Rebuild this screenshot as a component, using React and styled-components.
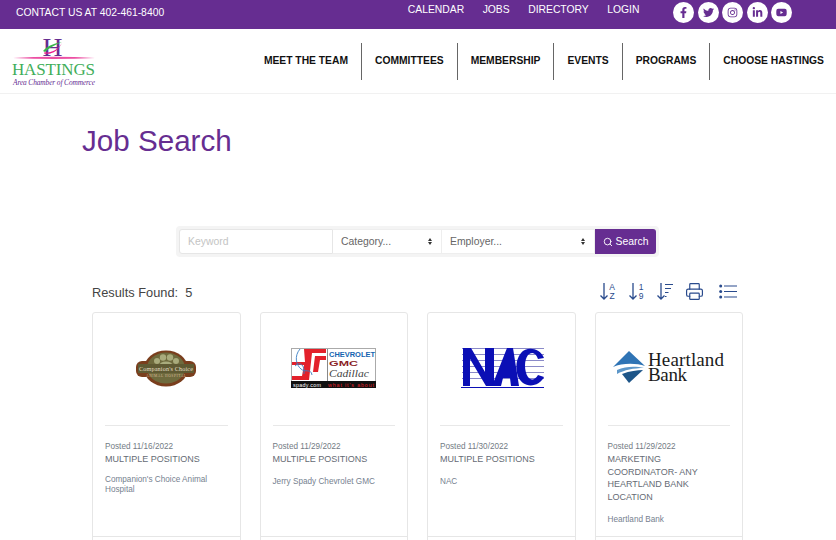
import React from 'react';
import styled, { createGlobalStyle } from 'styled-components';
import { FaFacebookF, FaTwitter, FaInstagram, FaLinkedinIn, FaYoutube } from 'react-icons/fa';
import { Printer, Search } from 'lucide-react';

const GlobalStyle = createGlobalStyle`
    html, body {
        margin: 0;
        height: 540px;
        overflow: hidden;
        background: #fff;
        font-family: "Liberation Sans", Arial, sans-serif;
    }
`;

const topLinks = ['CALENDAR', 'JOBS', 'DIRECTORY', 'LOGIN'];
const socials = [FaFacebookF, FaTwitter, FaInstagram, FaLinkedinIn, FaYoutube];
const navItems = ['MEET THE TEAM', 'COMMITTEES', 'MEMBERSHIP', 'EVENTS', 'PROGRAMS', 'CHOOSE HASTINGS'];

function SortArrow() {
    return <path d="M5 1 V17 M1.5 13.5 L5 17 L8.5 13.5" fill="none" stroke="currentColor" strokeWidth="1.3" />;
}

function SortLabelIcon({ top, bottom }) {
    return (
        <svg width="17" height="19" viewBox="0 0 17 19">
            <SortArrow />
            <text x="13" y="7.5" textAnchor="middle" fontSize="8.5" fontFamily="Liberation Sans, sans-serif" fill="currentColor">{top}</text>
            <text x="13" y="17" textAnchor="middle" fontSize="8.5" fontFamily="Liberation Sans, sans-serif" fill="currentColor">{bottom}</text>
        </svg>
    );
}

function SortBarsIcon() {
    return (
        <svg width="17" height="19" viewBox="0 0 17 19">
            <SortArrow />
            <path d="M9 2.5 H17 M9 6.5 H15 M9 10.5 H12.5 M9 14.5 H10.5" stroke="currentColor" strokeWidth="1.1" />
        </svg>
    );
}

function ListIcon() {
    return (
        <svg width="18" height="15" viewBox="0 0 18 15">
            <circle cx="1.7" cy="2" r="1.5" fill="currentColor" />
            <circle cx="1.7" cy="7.5" r="1.5" fill="currentColor" />
            <circle cx="1.7" cy="13" r="1.5" fill="currentColor" />
            <path d="M5 2 H18 M5 7.5 H18 M5 13 H18" stroke="currentColor" strokeWidth="1.2" />
        </svg>
    );
}

function HastingsLogo() {
    return (
        <svg width="86" height="60" viewBox="0 -10 86 60">
            <text x="31.5" y="19" fill="#662d91" fontFamily="Liberation Serif, serif" fontSize="26" textLength="20" lengthAdjust="spacingAndGlyphs">H</text>
            <path d="M32 14 C37 8 45 6 51 5 C46 7 39 10 34 15 Z" fill="#39b54a" />
            <path d="M33 15.5 C40 16 47 13 51 6 C47 14 41 18 33 16.5 Z" fill="#ec1e8c" />
            <path d="M2 21 Q43 18.6 84 21 Q43 23 2 21Z" fill="#ec4fa3" />
            <text x="1" y="38" fontFamily="Liberation Serif, serif" fontSize="17" fill="#3fae5a" textLength="83">HASTINGS</text>
            <text x="2" y="47.5" fontFamily="Liberation Serif, serif" fontStyle="italic" fontSize="7.4" fill="#662d91" textLength="82">Area Chamber of Commerce</text>
        </svg>
    );
}

function CompanionLogo() {
    return (
        <svg width="62" height="37" viewBox="0 0 62 37">
            <ellipse cx="31" cy="18.5" rx="22" ry="18" fill="#7a3e1d" />
            <rect x="1" y="11" width="60" height="16" rx="6" fill="#7a3e1d" />
            <ellipse cx="31" cy="18" rx="19" ry="15.5" fill="#6e6a3d" />
            <g fill="#a9ab7c">
                <circle cx="22" cy="11" r="3" />
                <circle cx="28" cy="7.5" r="3.2" />
                <circle cx="35" cy="7.5" r="3.2" />
                <circle cx="41" cy="11" r="3" />
                <ellipse cx="31" cy="16" rx="7" ry="4.5" />
            </g>
            <rect x="3" y="14" width="56" height="9" fill="#5f5a33" />
            <text x="31" y="21" textAnchor="middle" fontFamily="Liberation Serif, serif" fontSize="6.2" fill="#e4dfc6" textLength="54">Companion's Choice</text>
            <text x="31" y="27.4" textAnchor="middle" fontFamily="Liberation Serif, serif" fontSize="3.6" fill="#d8b998" textLength="40">ANIMAL HOSPITAL</text>
        </svg>
    );
}

function SpadyLogo() {
    return (
        <svg width="85" height="40" viewBox="0 0 85 40">
            <rect x="0.5" y="0.5" width="84" height="39" fill="#fff" stroke="#aaa" />
            <rect x="0" y="33" width="85" height="7" fill="#111" />
            <path d="M13 1 H35 V5 H21 L18 32 H1 V28 H11 L13 17 H1 V14 H14 Z" fill="#e3202a" />
            <path d="M24 8 H35 V12 H29 L27 24 H22 Z" fill="#e3202a" />
            <path d="M9 1 C3 8 5 17 10 21 C14 25 20 20 21 27 M4 18 C9 13 14 17 13 26" stroke="#3a7fc4" strokeWidth="0.9" fill="none" />
            <rect x="36" y="1" width="1" height="32" fill="#888" />
            <text x="38" y="9" fontSize="6.6" fontWeight="700" fontFamily="Liberation Sans, sans-serif" fill="#1564b0" textLength="46" lengthAdjust="spacingAndGlyphs">CHEVROLET</text>
            <text x="38" y="18" fontSize="6.6" fontWeight="700" fontFamily="Liberation Sans, sans-serif" fill="#8b1f27" textLength="29" lengthAdjust="spacingAndGlyphs">GMC</text>
            <text x="38" y="29" fontSize="10" fontStyle="italic" fontFamily="Liberation Serif, serif" fill="#444" textLength="40" lengthAdjust="spacingAndGlyphs">Cadillac</text>
            <text x="2" y="38.5" fontSize="5.4" fontFamily="Liberation Sans, sans-serif" fill="#fff" textLength="28">spady.com</text>
            <text x="37" y="38.5" fontSize="5.4" fontFamily="Liberation Sans, sans-serif" fill="#e3202a" textLength="46">what it's about</text>
        </svg>
    );
}

function NacLogo() {
    return (
        <svg width="86" height="42" viewBox="-3 0 86 42">
            <path d="M1 1.5 H85 M1 7.5 H85 M1 13.5 H85 M1 19.5 H85 M1 25.5 H85 M1 31.5 H85" stroke="#8a8ac8" strokeWidth="1" />
            <path d="M2 1 H10 L24 25 V1 H33 V39 H25 L9 12 V39 H2 Z" fill="#0b0fb5" />
            <path d="M31 39 L46 1 H52 L58 39 H50 L49 31 H42 L40 39 Z" fill="#0b0fb5" />
            <path d="M83 11 C79 1 66 -1 60 6 C53 14 54 30 62 36 C69 41 79 38 83 30 L77 28 C74 33 70 34 67 30 C63 24 63 13 67 8 C71 4 75 6 77 12 Z" fill="#0b0fb5" />
            <path d="M0 40.5 H84" stroke="#0b0fb5" strokeWidth="1.2" />
        </svg>
    );
}

function HeartlandLogo() {
    return (
        <svg width="113" height="38" viewBox="0 -1 113 38">
            <path d="M17 1 L33 16 C24 13 10 13 1 17 Z" fill="#2f74b5" />
            <path d="M5 20 C14 16 24 16 32 18 C22 18 12 20 5 24 Z" fill="#5d97c9" />
            <path d="M10 24 C18 21 25 20 31 20 L17 33 Z" fill="#1d5588" />
            <text fontFamily="Liberation Serif, serif" fontSize="19" fill="#1b1b1b">
                <tspan x="36" y="16" textLength="76">Heartland</tspan>
                <tspan x="36" y="31" textLength="39">Bank</tspan>
            </text>
        </svg>
    );
}

const jobs = [
    { posted: '11/16/2022', title: 'MULTIPLE POSITIONS', employer: "Companion's Choice Animal Hospital", Logo: CompanionLogo },
    { posted: '11/29/2022', title: 'MULTIPLE POSITIONS', employer: 'Jerry Spady Chevrolet GMC', Logo: SpadyLogo },
    { posted: '11/30/2022', title: 'MULTIPLE POSITIONS', employer: 'NAC', Logo: NacLogo },
    { posted: '11/29/2022', title: 'MARKETING COORDINATOR- ANY HEARTLAND BANK LOCATION', employer: 'Heartland Bank', Logo: HeartlandLogo },
];

export default function App() {
    return (
        <>
            <GlobalStyle />
            <TopBar>
                <Contact>CONTACT US AT 402-461-8400</Contact>
                <TopRight>
                    <TopLinks>
                        {topLinks.map((link) => (
                            <TopLink key={link}>{link}</TopLink>
                        ))}
                    </TopLinks>
                    <Socials>
                        {socials.map((Icon, i) => (
                            <Social key={i}>
                                <Icon size={11} />
                            </Social>
                        ))}
                    </Socials>
                </TopRight>
            </TopBar>
            <Header>
                <LogoBox>
                    <HastingsLogo />
                </LogoBox>
                <Nav>
                    {navItems.map((item) => (
                        <NavItem key={item}>{item}</NavItem>
                    ))}
                </Nav>
            </Header>
            <Main>
                <Title>Job Search</Title>
                <SearchBar>
                    <Keyword placeholder="Keyword" />
                    <FakeSelect $width={109}>
                        Category...
                        <Caret />
                    </FakeSelect>
                    <FakeSelect $width={153}>
                        Employer...
                        <Caret />
                    </FakeSelect>
                    <SearchButton>
                        <Search size={10} strokeWidth={2.2} />
                        Search
                    </SearchButton>
                </SearchBar>
                <ResultsRow>
                    <Results>Results Found:&nbsp; 5</Results>
                    <Tools>
                        <SortLabelIcon top="A" bottom="Z" />
                        <SortLabelIcon top="1" bottom="9" />
                        <SortBarsIcon />
                        <Printer size={19} strokeWidth={1.5} />
                        <ListIcon />
                    </Tools>
                </ResultsRow>
                <Cards>
                    {jobs.map((job) => (
                        <Card key={job.employer}>
                            <CardImage>
                                <job.Logo />
                            </CardImage>
                            <CardBody>
                                <Posted>Posted {job.posted}</Posted>
                                <JobTitle>{job.title}</JobTitle>
                                <Employer>{job.employer}</Employer>
                            </CardBody>
                            <CardFooter />
                        </Card>
                    ))}
                </Cards>
            </Main>
        </>
    );
}

const TopBar = styled.div`
    height: 29px;
    background: #662d91;
    color: #fff;
    display: flex;
    justify-content: space-between;
    padding: 0 44px 0 16px;
    font-size: 10.35px;
`;
const Contact = styled.div`
    line-height: 25px;
`;
const TopRight = styled.div`
    display: flex;
    gap: 34px;
`;
const TopLinks = styled.div`
    display: flex;
    gap: 18.5px;
    line-height: 19px;
`;
const TopLink = styled.span``;
const Socials = styled.div`
    display: flex;
    gap: 3.4px;
    padding-top: 1.5px;
`;
const Social = styled.div`
    width: 21px;
    height: 21px;
    border-radius: 50%;
    background: #fff;
    color: #662d91;
    display: flex;
    align-items: center;
    justify-content: center;
`;
const Header = styled.div`
    height: 64px;
    border-bottom: 1px solid #f1f1f1;
    display: flex;
    align-items: center;
    justify-content: space-between;
    padding-left: 11px;
`;
const LogoBox = styled.div`
    display: flex;
    margin-top: -8px;
`;
const Nav = styled.div`
    display: flex;
    align-items: center;
    margin-top: 1px;
`;
const NavItem = styled.div`
    height: 37px;
    line-height: 36px;
    padding: 0 13px;
    font-size: 10.3px;
    font-weight: 700;
    color: #111;
    white-space: nowrap;
    border-right: 1px solid #666;
    &:last-child {
        border-right: 0;
        padding-right: 12px;
    }
`;
const Main = styled.div`
    padding: 0 93px 0 92px;
`;
const Title = styled.h1`
    margin: 29px 0 0 -10px;
    font-size: 29.6px;
    line-height: 36px;
    font-weight: 400;
    color: #662d91;
`;
const SearchBar = styled.div`
    display: flex;
    width: 477px;
    height: 25px;
    margin: 67px 0 0 84px;
    padding: 3px;
    background: #f4f4f4;
    border-radius: 4px;
`;
const Keyword = styled.input`
    box-sizing: border-box;
    width: 154px;
    height: 25px;
    padding: 0 8px;
    border: 1px solid #e6e6e6;
    border-radius: 3px 0 0 3px;
    background: #fff;
    font: 10.4px "Liberation Sans", Arial, sans-serif;
    outline: none;
    &::placeholder {
        color: #c4c4c4;
    }
`;
const FakeSelect = styled.div`
    box-sizing: border-box;
    width: ${(p) => p.$width}px;
    height: 25px;
    padding: 0 8px;
    border: 1px solid #eeeeee;
    border-left: 0;
    background: #fff;
    font-size: 10.4px;
    color: #666;
    display: flex;
    justify-content: space-between;
    align-items: center;
`;
const Caret = styled.span`
    width: 5px;
    height: 7px;
    position: relative;
    &::before,
    &::after {
        content: '';
        position: absolute;
        left: 0;
        border-left: 2.5px solid transparent;
        border-right: 2.5px solid transparent;
    }
    &::before {
        top: 0;
        border-bottom: 3px solid #333;
    }
    &::after {
        bottom: 0;
        border-top: 3px solid #333;
    }
`;
const SearchButton = styled.div`
    width: 61px;
    height: 25px;
    box-sizing: border-box;
    background: #662d91;
    color: #fff;
    border-radius: 0 3px 3px 0;
    font-size: 10.4px;
    display: flex;
    align-items: center;
    justify-content: center;
    gap: 3px;
`;
const ResultsRow = styled.div`
    display: flex;
    justify-content: space-between;
    align-items: center;
    height: 30px;
    margin-top: 20px;
`;
const Results = styled.div`
    font-size: 12.8px;
    color: #444;
`;
const Tools = styled.div`
    display: flex;
    align-items: center;
    gap: 11.5px;
    color: #2a4b8d;
    margin: -2px 6px 0 0;
    & > svg:last-child {
        margin-left: 4px;
    }
`;
const Cards = styled.div`
    display: grid;
    grid-template-columns: repeat(4, 1fr);
    gap: 19px;
    margin-top: 5px;
`;
const Card = styled.div`
    height: 260px;
    box-sizing: border-box;
    border: 1px solid #e6e6e6;
    border-radius: 3px;
    padding: 0 12px;
    display: flex;
    flex-direction: column;
`;
const CardImage = styled.div`
    height: 113px;
    flex: none;
    border-bottom: 1px solid #e8e8e8;
    display: flex;
    align-items: center;
    justify-content: center;
    padding-bottom: 2px;
    box-sizing: border-box;
`;
const CardBody = styled.div`
    height: 110px;
    flex: none;
    padding-top: 14px;
    box-sizing: border-box;
`;
const Posted = styled.div`
    font-size: 8.2px;
    line-height: 13px;
    color: #737b84;
`;
const JobTitle = styled.div`
    font-size: 9px;
    line-height: 12.6px;
    color: #666b75;
`;
const Employer = styled.div`
    font-size: 8.2px;
    line-height: 10px;
    min-height: 14px;
    display: flex;
    align-items: center;
    color: #76818f;
    margin-top: 9.2px;
`;
const CardFooter = styled.div`
    border-top: 1px solid #e6e6e6;
    margin: 0 -12px;
    flex: 1;
`;
